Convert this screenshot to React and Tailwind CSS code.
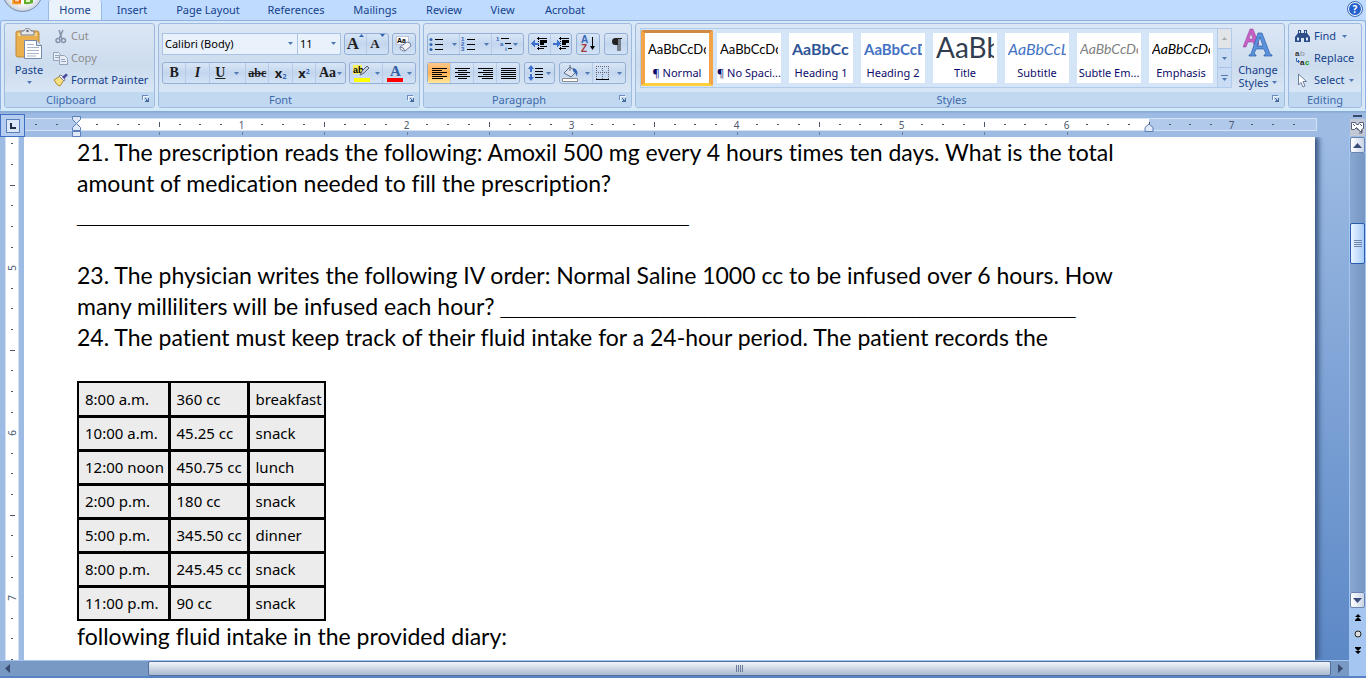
import clsx from "clsx";

const tabs = [
  { name: "Home", width: "w-[54px]" },
  { name: "Insert", width: "w-[60px]" },
  { name: "Page Layout", width: "w-[92px]" },
  { name: "References", width: "w-[84px]" },
  { name: "Mailings", width: "w-[74px]" },
  { name: "Review", width: "w-[64px]" },
  { name: "View", width: "w-[53px]" },
  { name: "Acrobat", width: "w-[72px]" },
];

const styleItems = [
  { name: "¶ Normal", sample: "AaBbCcDc", look: "text-[13px] text-black", selected: true },
  { name: "¶ No Spaci...", sample: "AaBbCcDc", look: "text-[13px] text-black" },
  { name: "Heading 1", sample: "AaBbCc", look: "text-base font-bold text-[#2f5597]" },
  { name: "Heading 2", sample: "AaBbCcD", look: "text-[15px] font-bold text-[#4472c4]" },
  { name: "Title", sample: "AaBb", look: "pb-1 text-[28px] text-[#323e4f]" },
  { name: "Subtitle", sample: "AaBbCcL", look: "text-base italic text-[#4472c4]" },
  { name: "Subtle Em...", sample: "AaBbCcDc", look: "text-sm italic text-[#808080]" },
  { name: "Emphasis", sample: "AaBbCcDc", look: "text-sm italic text-black" },
];

const intake = [
  ["8:00 a.m.", "360 cc", "breakfast"],
  ["10:00 a.m.", "45.25 cc", "snack"],
  ["12:00 noon", "450.75 cc", "lunch"],
  ["2:00 p.m.", "180 cc", "snack"],
  ["5:00 p.m.", "345.50 cc", "dinner"],
  ["8:00 p.m.", "245.45 cc", "snack"],
  ["11:00 p.m.", "90 cc", "snack"],
];

const Caret = ({ className = "" }) => (
  <svg className={clsx("shrink-0", className)} width="5" height="3" viewBox="0 0 5 3">
    <path d="M0 0h5L2.500 3z" fill="#4f79b5" />
  </svg>
);

const Launcher = ({ label }) => (
  <button aria-label={label} className="absolute right-0 top-0 flex h-[14px] w-3 items-center">
    <svg width="8" height="8" viewBox="0 0 8 8" fill="none" shapeRendering="crispEdges">
      <path d="M1.500 6V1.500H7" stroke="#fff" opacity=".7" />
      <path d="M0.500 5V0.500H6" stroke="#6a8cbc" />
      <path d="M3 3l3 3" stroke="#49699a" />
      <path d="M4 5h2V3h1v4H3V6h1z" fill="#49699a" />
    </svg>
  </button>
);

const Group = ({ title, launcher, className, children }) => (
  <section className={clsx("flex h-[85px] flex-col overflow-hidden rounded-[3px] border border-[#9cbbdf] bg-linear-to-b from-[#dce7f5] via-[#ccdcee] to-[#dfebf8]", className)}>
    <div className="min-h-0 flex-1">{children}</div>
    <div className={clsx("relative h-[15px] bg-[#c1d8f1] text-center leading-[15px] text-[#3e6aaa]", launcher && "pr-[17px]")}>
      {title}
      {launcher && <Launcher label={`${title} options`} />}
    </div>
  </section>
);

const ButtonBar = ({ className, children }) => (
  <div className={clsx("flex h-[22px] divide-x divide-[#b4cae6] rounded-[3px] border border-[#94b0d6] bg-linear-to-b from-[#d9e6f6] via-[#c3d6ee] to-[#d3e3f6]", className)}>
    {children}
  </div>
);

const Tool = ({ label, caret, active, className, children }) => (
  <button
    aria-label={label}
    className={clsx(
      "flex flex-1 items-center justify-center gap-1",
      active && "bg-linear-to-b from-[#fdc58a] via-[#ffb04f] to-[#ffe89a]",
      className
    )}
  >
    {children}
    {caret && <Caret />}
  </button>
);

const Lines = ({ rows }) => (
  <svg width="15" height="11" viewBox="0 0 15 11" shapeRendering="crispEdges">
    {rows.map(([x, w], i) => (
      <rect key={i} x={x} y={i * 2} width={w} height="1" fill="#000" />
    ))}
  </svg>
);

const ListIcon = ({ kind }) => (
  <svg width="16" height="16" viewBox="0 0 16 16">
    {kind === "multi" ? (
      <>
        <path d="M5 2.500h8M9 7.500h6M12 12.500h4" stroke="#000" />
        <g fill="#3565b5" fontSize="6" fontWeight="bold" fontFamily="Liberation Sans">
          <text x="0" y="5">1</text>
          <text x="4" y="10">a</text>
          <text x="9" y="15">i</text>
        </g>
      </>
    ) : (
      <path d="M6 3.500h8M6 8.500h8M6 13.500h8" stroke="#000" />
    )}
    {kind === "bullet" &&
      [3.5, 8.5, 13.5].map((y) => <circle key={y} cx="2" cy={y} r="1.500" fill="#3565b5" />)}
    {kind === "number" && (
      <g fill="#3565b5" fontSize="6" fontWeight="bold" fontFamily="Liberation Sans">
        <text x="0" y="5">1</text>
        <text x="0" y="10">2</text>
        <text x="0" y="15">3</text>
      </g>
    )}
  </svg>
);

const IndentIcon = ({ out }) => (
  <svg width="17" height="14" viewBox="0 0 17 14" shapeRendering="crispEdges">
    <path d="M6 1.500h10M9 3.500h7M9 5.500h7M9 7.500h4M9 9.500h7M6 11.500h7" stroke="#000" />
    <path d="M9 4.500h7M9 6.500h4" stroke="#000" />
    <path d="M7.500 0v14" stroke="#000" strokeDasharray="1 1" />
    <path d={out ? "M0 6.500l4-4v3h4v2H4v3z" : "M8 6.500l-4-4v3H0v2h4v3z"} fill="#3a6fd0" />
  </svg>
);

const PasteIcon = () => (
  <svg width="28" height="32" viewBox="0 0 28 32">
    <rect x="1" y="3" width="23" height="26" rx="2" fill="#eab04e" stroke="#b98a3e" />
    <path d="M3 5h19v3H3z" fill="#f8d48d" />
    <path d="M6 7V3h3c1-3.500 6-3.500 7 0h3v4z" fill="#e6e8ec" stroke="#777d87" />
    <circle cx="12.500" cy="3" r="1.200" fill="#5a6478" />
    <path d="M9.500 12.500h12l5 5v13h-17z" fill="#fff" stroke="#7189ad" />
    <path d="M21.500 12.500v5h5" fill="#dbe6f5" stroke="#7189ad" />
    <path d="M12 16.500h7M12 19.500h12M12 22.500h12M12 25.500h12M12 28h9" stroke="#a9b5c9" />
  </svg>
);

const OfficeOrb = () => (
  <svg className="absolute left-0 top-0" width="46" height="14" viewBox="0 0 46 14">
    <defs>
      <radialGradient id="orb" cx="23" cy="-8" r="21" gradientUnits="userSpaceOnUse">
        <stop offset="0.500" stopColor="#fff" />
        <stop offset="0.850" stopColor="#d6dce7" />
        <stop offset="1" stopColor="#a3acba" />
      </radialGradient>
    </defs>
    <circle cx="22.500" cy="-8.500" r="20" fill="url(#orb)" stroke="#7b8fae" />
    <path d="M13 0h8v3.500q-2 1-7 .5-1-.5-1-4z" fill="#e8641b" />
    <path d="M15 0h4v1.500h-4z" fill="#ffd9a0" />
    <path d="M24 -1h9v4q-3 1.500-9 1z" fill="#5fae2c" />
    <path d="M26 0h4v2h-4z" fill="#e4f6c3" />
    <path d="M13 0v3.500h8" fill="none" stroke="#f5a315" strokeWidth="1.500" />
  </svg>
);

const ClipboardGroup = () => (
  <Group title="Clipboard" launcher className="w-[151px]">
    <div className="flex h-full">
      <button className="flex w-[48px] flex-col items-center pt-1">
        <PasteIcon />
        <span className="mt-[3px] leading-[14px]">Paste</span>
        <Caret className="mt-1" />
      </button>
      <div className="flex flex-col items-start pt-px">
        <button className="flex h-[22px] items-center gap-[3px] text-[#8d8d8d]">
          <svg width="15" height="15" viewBox="0 0 15 15" fill="none" stroke="#8493a9">
            <path d="M6 1l3 9M10 1L6 10" strokeWidth="1.500" />
            <circle cx="5" cy="11.500" r="2" strokeWidth="1.500" />
            <circle cx="10.500" cy="11.500" r="2" strokeWidth="1.500" />
          </svg>
          Cut
        </button>
        <button className="flex h-[22px] items-center gap-[3px] text-[#8d8d8d]">
          <svg width="15" height="14" viewBox="0 0 15 14" fill="#e9eef6" stroke="#93a3bb">
            <path d="M.5 1.500h5l2 2v6h-7zM2 4.500h4M2 6.500h4" />
            <path d="M6.500 4.500h5l3 3v6h-8zM8 8.500h4M8 10.500h5" />
          </svg>
          Copy
        </button>
        <button className="flex h-[22px] items-center gap-[3px]">
          <svg width="15" height="14" viewBox="0 0 15 14">
            <path d="M1 7l6-4 4 4-4 6q-3 0-6-6z" fill="#f5df83" stroke="#ad8b32" />
            <path d="M6 3l2-1 4 4-1 2z" fill="#fff" stroke="#707b8f" />
            <path d="M9 4l4-3.500L15 2l-4 4z" fill="#4d4a9b" />
          </svg>
          Format Painter
        </button>
      </div>
    </div>
  </Group>
);

const Combo = ({ label, value, className }) => (
  <label className={clsx("relative block h-[22px] border border-[#a9c3e6] bg-[#e9f1fb]", className)}>
    <select aria-label={label} className="block h-full w-full appearance-none px-[2px] text-black">
      <option>{value}</option>
    </select>
    <Caret className="absolute right-1 top-2" />
  </label>
);

const FontGroup = () => (
  <Group title="Font" launcher className="w-[262px]">
    <div className="flex flex-col gap-[7px] px-[3px] pt-[9px]">
      <div className="flex gap-[3px]">
        <div className="flex">
          <Combo label="Font" value="Calibri (Body)" className="w-[136px]" />
          <Combo label="Font size" value="11" className="w-[43px] border-l-0" />
        </div>
        <ButtonBar className="w-[45px] font-['Liberation_Serif'] font-bold text-[#222]">
          <Tool label="Grow font">
            <span className="flex items-start text-[17px] leading-5">A<svg width="5" height="4" viewBox="0 0 5 4"><path d="M0 3L2.500 0 5 3z" fill="#3565b5" /></svg></span>
          </Tool>
          <Tool label="Shrink font">
            <span className="flex items-start text-[13px] leading-5">A<svg width="5" height="4" viewBox="0 0 5 4"><path d="M0 0h5L2.500 3z" fill="#3565b5" /></svg></span>
          </Tool>
        </ButtonBar>
        <ButtonBar className="w-6">
          <Tool label="Clear formatting">
            <svg width="18" height="18" viewBox="0 0 18 18">
              <rect x="1.500" y="1.500" width="12" height="8" fill="#fff" stroke="#b9c4d8" />
              <text x="2" y="8" fontSize="7" fontWeight="bold" fontFamily="Liberation Sans">Aa</text>
              <path d="M5 12l7-5q4 0 4 4l-6 5q-5 0-5-4z" fill="#f3f3f8" stroke="#73809b" />
              <path d="M5 12q4 0 5 4" fill="none" stroke="#73809b" />
            </svg>
          </Tool>
        </ButtonBar>
      </div>
      <div className="flex gap-[3px]">
        <ButtonBar className="w-[184px] font-['Liberation_Serif'] text-sm font-bold text-[#1d1d1d]">
          <Tool label="Bold">B</Tool>
          <Tool label="Italic"><i>I</i></Tool>
          <Tool label="Underline" caret className="flex-[1.600] gap-[9px]"><u>U</u></Tool>
          <Tool label="Strikethrough"><s className="text-xs">abc</s></Tool>
          <Tool label="Subscript"><span className="font-['Noto_Sans'] text-[13px]">x<sub className="text-[7px] text-[#3565b5]">2</sub></span></Tool>
          <Tool label="Superscript"><span className="font-['Noto_Sans'] text-[13px]">x<sup className="text-[7px] text-[#3565b5]">2</sup></span></Tool>
          <Tool label="Change case" caret className="flex-[1.300] gap-px">Aa</Tool>
        </ButtonBar>
        <ButtonBar className="w-[67px]">
          <Tool label="Text highlight color" caret>
            <svg width="18" height="18" viewBox="0 0 18 18">
              <path d="M0 1h9v9H0z" fill="#f6f05a" />
              <text x="0" y="9" fontSize="9" fontWeight="bold" fontFamily="Liberation Sans">ab</text>
              <path d="M7 11l2-4 5-5 2 2-5 5z" fill="#c2ccdc" stroke="#5a6274" />
              <path d="M1 14h16v4H1z" fill="#ffff00" />
            </svg>
          </Tool>
          <Tool label="Font color" caret>
            <svg width="16" height="18" viewBox="0 0 16 18">
              <text x="3" y="12" fontSize="15" fontWeight="bold" fill="#355ea3" fontFamily="Liberation Serif">A</text>
              <path d="M0 14h16v4H0z" fill="#ff0000" />
            </svg>
          </Tool>
        </ButtonBar>
      </div>
    </div>
  </Group>
);

const ParagraphGroup = () => (
  <Group title="Paragraph" launcher className="w-[209px]">
    <div className="flex flex-col gap-[7px] px-[3px] pt-[9px]">
      <div className="flex gap-1">
        <ButtonBar className="w-[98px]">
          <Tool label="Bullets" caret className="gap-[7px]"><ListIcon kind="bullet" /></Tool>
          <Tool label="Numbering" caret className="gap-[7px]"><ListIcon kind="number" /></Tool>
          <Tool label="Multilevel list" caret className="gap-px"><ListIcon kind="multi" /></Tool>
        </ButtonBar>
        <ButtonBar className="w-[45px]">
          <Tool label="Decrease indent"><IndentIcon out /></Tool>
          <Tool label="Increase indent"><IndentIcon /></Tool>
        </ButtonBar>
        <ButtonBar className="w-6">
          <Tool label="Sort">
            <svg width="17" height="18" viewBox="0 0 17 18">
              <g fontSize="10" fontWeight="bold" fontFamily="Liberation Sans">
                <text x="1" y="8" fill="#3565b5">A</text>
                <text x="1" y="17" fill="#a33a3a">Z</text>
              </g>
              <path d="M12.500 2v11" stroke="#000" />
              <path d="M10 11h5l-2.500 4z" />
            </svg>
          </Tool>
        </ButtonBar>
        <ButtonBar className="w-6">
          <Tool label="Show paragraph marks">
            <svg width="11" height="13" viewBox="0 0 11 13">
              <path d="M4.500 0H11v1H9.500v12h-1V1h-1v12h-1V7H4.500a3.500 3.500 0 010-7z" fill="#222" />
            </svg>
          </Tool>
        </ButtonBar>
      </div>
      <div className="flex gap-1">
        <ButtonBar className="w-[93px]">
          <Tool label="Align left" active><Lines rows={[[0, 15], [0, 10], [0, 15], [0, 10], [0, 15], [0, 11]]} /></Tool>
          <Tool label="Center"><Lines rows={[[0, 15], [3, 9], [0, 15], [3, 9], [0, 15], [3, 9]]} /></Tool>
          <Tool label="Align right"><Lines rows={[[0, 15], [5, 10], [0, 15], [5, 10], [0, 15], [4, 11]]} /></Tool>
          <Tool label="Justify"><Lines rows={[[0, 15], [0, 15], [0, 15], [0, 15], [0, 15], [0, 15]]} /></Tool>
        </ButtonBar>
        <ButtonBar className="w-[31px]">
          <Tool label="Line spacing" caret className="gap-[2px]">
            <svg width="16" height="16" viewBox="0 0 16 16">
              <path d="M3 0l3 4H4v3H2V4H0zM3 16l3-4H4V9H2v3H0z" fill="#3a6fd0" />
              <path d="M7 3.500h8M7 6.500h8M7 9.500h8M7 12.500h8" stroke="#000" />
            </svg>
          </Tool>
        </ButtonBar>
        <ButtonBar className="w-[67px]">
          <Tool label="Shading" caret className="gap-[6px]">
            <svg width="17" height="17" viewBox="0 0 17 17">
              <path d="M2 8l6-6 6 5-5 5z" fill="#dfe5ef" stroke="#5b6a85" />
              <path d="M8 0v6" stroke="#5b6a85" />
              <path d="M11 3q6 1 4 9-1-4-4-6z" fill="#3565b5" />
              <path d="M.5 13.500h15v3H.5z" fill="#fff" stroke="#8b8b8b" />
            </svg>
          </Tool>
          <Tool label="Borders" caret className="gap-[7px]">
            <svg width="14" height="14" viewBox="0 0 14 14" shapeRendering="crispEdges">
              <path d="M0 .5h13M0 6.500h13M.5 0v13M6.500 0v13M12.500 0v13" stroke="#667" strokeDasharray="1 1" />
              <path d="M0 13.500h13" stroke="#000" />
            </svg>
          </Tool>
        </ButtonBar>
      </div>
    </div>
  </Group>
);

const StylesGroup = () => (
  <Group title="Styles" launcher className="min-w-0 flex-1">
    <div className="flex h-full items-start gap-[3px] pl-1 pr-[3px] pt-1">
      <div className="flex h-[60px] min-w-0 flex-1 border border-[#b1cbea] bg-[#d4e5f7]">
        <div className="flex min-w-0 flex-1 overflow-hidden">
          {styleItems.map((item) => (
            <button
              key={item.name}
              className={clsx(
                "m-px h-[56px] w-[70px] shrink-0 border-[3px] first:mx-0 first:w-[72px] first:border-x-4",
                item.selected
                  ? "rounded-[2px] border-b-[#ffcf3d] border-l-[#f3a447] border-r-[#f3a447] border-t-[#d08a45]"
                  : "border-transparent"
              )}
            >
              <span className="flex h-full flex-col items-center overflow-hidden bg-white">
                <span className={clsx("flex h-8 w-full items-center overflow-hidden whitespace-nowrap px-[3px] font-[Lato] leading-none", item.look)}>
                  <span className="w-full overflow-hidden text-left leading-[24px]">{item.sample}</span>
                </span>
                <span className="whitespace-nowrap leading-4 text-[#0b0b6b]">{item.name}</span>
              </span>
            </button>
          ))}
        </div>
        <div className="flex w-[14px] flex-col divide-y divide-[#a9c3e6] border-l border-[#b1cbea] bg-[#c9dcf3]">
          <button aria-label="Previous styles" className="flex flex-1 items-center justify-center bg-[#e2e4e8]">
            <svg width="5" height="3" viewBox="0 0 5 3"><path d="M0 3h5L2.500 0z" fill="#a9a9a9" /></svg>
          </button>
          <button aria-label="More rows" className="flex flex-1 items-center justify-center"><Caret /></button>
          <button aria-label="All styles" className="flex flex-1 flex-col items-center justify-center gap-[2px]">
            <span className="h-px w-[7px] bg-[#4f79b5]" />
            <Caret />
          </button>
        </div>
      </div>
      <button className="flex w-[46px] flex-col items-center leading-[13px]">
        <svg width="30" height="31" viewBox="0 0 30 31">
          <path d="M0 19L7 1h3l6 15-2 3h-2l-2-5H5l-2 5zM6 11h4L8 5z" fill="#c85fc4" stroke="#8c3f9a" strokeWidth=".5" />
          <path d="M6 27l2-1 7-21h4l8 21 2 1v1h-8v-1l2-1-2-5h-8l-2 5 2 1v1H6zM14 18h6l-3-9z" fill="#5a92de" stroke="#2f5fa8" strokeWidth=".7" />
        </svg>
        <span className="mt-1">Change</span>
        <span className="flex items-center gap-1">Styles <Caret /></span>
      </button>
    </div>
  </Group>
);

const EditingGroup = () => (
  <Group title="Editing" className="w-[74px]">
    <div className="flex flex-col items-start pl-[6px] pt-px">
      <button className="flex h-[22px] items-center gap-1">
        <svg width="15" height="14" viewBox="0 0 15 14" fill="#2d4e86">
          <path d="M3 1h3v3h3V1h3v3l3 4v5H9V9H6v4H0V8l3-4z" />
          <path d="M2 8.500h2v3H2zM11 8.500h2v3h-2zM4 2h1v2H4zM10 2h1v2h-1z" fill="#dce8f7" />
        </svg>
        Find <Caret className="ml-[2px]" />
      </button>
      <button className="flex h-[22px] items-center gap-1">
        <svg width="15" height="18" viewBox="0 0 15 18" fontFamily="Liberation Sans" fontWeight="bold" fontSize="8">
          <text x="0" y="7" fill="#333">a</text>
          <text x="5" y="7" fill="#a0a8b5">b</text>
          <text x="5" y="16" fill="#222">a</text>
          <text x="10" y="16" fill="#149414">c</text>
          <path d="M1.500 9v3.500H4M3 11l1.500 1.500L3 14" fill="none" stroke="#3565b5" />
        </svg>
        Replace
      </button>
      <button className="flex h-[22px] items-center gap-1">
        <svg width="15" height="15" viewBox="0 0 15 15">
          <path d="M3.500 1v11l2.500-2.500 2 4.500 2-1-2-4.500h3.500z" fill="#fff" stroke="#6b7f9e" />
        </svg>
        Select <Caret />
      </button>
    </div>
  </Group>
);

const Mark = ({ n, number, vertical }) => {
  if (n === 7)
    return <span className={clsx("text-[10px] leading-none text-[#4c5a6e]", vertical && "-rotate-90")}>{number}</span>;
  const long = n === 3;
  return (
    <span
      className={clsx(
        "bg-[#4c5566]",
        !long && "h-px w-[2px]",
        long && (vertical ? "h-px w-[5px]" : "h-[5px] w-px")
      )}
    />
  );
};

const RulerInch = ({ number, vertical }) => (
  <div className={clsx("grid shrink-0 place-items-center", vertical ? "h-[165px] w-full grid-rows-8" : "h-full w-[165px] grid-cols-8")}>
    {[0, 1, 2, 3, 4, 5, 6, 7].map((n) => (
      <Mark key={n} n={n} number={number} vertical={vertical} />
    ))}
  </div>
);

const Ruler = () => (
  <div className="flex h-[23px] shrink-0 items-start bg-[#9dbbe3]">
    <button aria-label="Tab stop" className="flex h-[23px] w-[25px] items-center justify-center border border-[#3d6fc4] bg-[#b5cdf0]">
      <span className="flex h-[14px] w-[14px] items-center justify-center border border-[#5b7fb9] bg-[#dce8f8]">
        <span className="h-[6px] w-[6px] border-b-2 border-l-2 border-[#222c44]" />
      </span>
    </button>
    <div className="relative mt-1 flex h-[13px] w-[1292px] border-y border-r border-[#d5e2f5]">
      <div className="flex w-[51px] items-center justify-center gap-[19px] bg-[#b1c9eb] pr-2">
        <span className="h-px w-[2px] bg-[#4c5566]" />
        <span className="h-px w-[2px] bg-[#4c5566]" />
      </div>
      <div className="w-[1073px] bg-white" />
      <div className="flex-1 bg-[#b1c9eb]" />
      <div className="absolute inset-y-0 left-[62px] right-5 flex overflow-hidden">
        {[1, 2, 3, 4, 5, 6, 7].map((n) => (
          <RulerInch key={n} number={n} />
        ))}
        <div className="grid w-[62px] shrink-0 grid-cols-3 place-items-center">
          <Mark n={0} />
          <Mark n={1} />
          <Mark n={2} />
        </div>
      </div>
      {/* default tab stops, one every half inch */}
      <div className="absolute left-[134px] top-[13px] grid w-[990px] grid-cols-12">
        {Array.from({ length: 12 }, (_, i) => (
          <span key={i} className="h-[3px] w-px bg-[#6f7f99]" />
        ))}
      </div>
      <svg className="absolute -top-1 left-[46px]" width="11" height="23" viewBox="0 0 11 23" fill="#dfe9f7" stroke="#5b7fb9">
        <path d="M1.500 1.500h8v3l-4 4-4-4zM1.500 15.500v-3l4-4 4 4v3zM1.500 16.500h8v5h-8z" />
      </svg>
      <svg className="absolute left-[1119px] top-1" width="10" height="9" viewBox="0 0 10 9" fill="#dfe9f7" stroke="#5b7fb9">
        <path d="M1 8.500v-4L5 1l4 3.500v4z" />
      </svg>
    </div>
    <span className="flex-1" />
    <button aria-label="View ruler" className="flex w-[17px] flex-col items-center gap-[2px] pt-px">
      <span className="h-[2px] w-[9px] bg-[#37496b]" />
      <svg width="15" height="17" viewBox="0 0 15 17">
        <path d="M0 0h15v17H0z" fill="#c3c9d4" />
        <path d="M1.500 3.500h4l1 2h2l1-2h4v6l-2 1v3l-2-2-3-3-2 2h-3z" fill="#fff" stroke="#56627c" />
        <path d="M3 5l2 2M6 9l5 4M9 14h3v-3M10 5l2 2" fill="none" stroke="#56627c" />
      </svg>
    </button>
  </div>
);

const Blank = ({ length }) => (
  <span className="font-['Liberation_Sans'] text-[22px] font-bold leading-none">{"_".repeat(length)}</span>
);

const Document = () => (
  <article className="w-[1291px] shrink-0 bg-white pl-[53px] font-[Lato] text-[23px] leading-[31px] text-black shadow-[4px_0_5px_#3c5a85] [font-variant-ligatures:none]">
    <p>
      21. The prescription reads the following: Amoxil 500 mg every 4 hours times ten days. What is the total
      <br />
      amount of medication needed to fill the prescription?
    </p>
    <p><Blank length={50} /></p>
    <p className="mt-[30px]">
      23. The physician writes the following IV order: Normal Saline 1000 cc to be infused over 6 hours. How
      <br />
      many milliliters will be infused each hour? <Blank length={47} />
    </p>
    <p>24. The patient must keep track of their fluid intake for a 24-hour period. The patient records the</p>
    <table className="mt-7 border-collapse border-2 border-b-0 border-black bg-[#ececec] font-['Noto_Sans'] text-[15px] leading-5">
      <tbody>
        {intake.map(([time, amount, meal]) => (
          <tr key={time} className="h-[34px] border-b-[3px] border-black last:border-b-2">
            <td className="w-[91px] border-r-[3px] border-black pl-[6px]">{time}</td>
            <td className="w-[79px] border-r-[3px] border-black pl-[6px]">{amount}</td>
            <td className="w-[77px] pl-[6px]">{meal}</td>
          </tr>
        ))}
      </tbody>
    </table>
    <p>following fluid intake in the provided diary:</p>
  </article>
);

const VerticalScroll = () => (
  <div className="flex w-[17px] flex-col items-center border-x border-[#a6c6f2] bg-[#a6c6f2]">
    <button aria-label="Scroll up" className="flex h-4 w-[15px] items-center justify-center rounded-[2px] border border-[#6c84ad] bg-linear-to-r from-white to-[#c9d5e8]">
      <svg width="9" height="5" viewBox="0 0 9 5"><path d="M0 5h9L4.500 0z" fill="#3a4c7a" /></svg>
    </button>
    <div className="flex min-h-0 w-full flex-1 flex-col bg-linear-to-r from-[#88a7d0] to-[#7697c4] pt-[70px]">
      <div className="flex h-[41px] w-[15px] flex-col items-center justify-center gap-px rounded-[2px] border border-[#2c5cae] bg-linear-to-r from-[#e9f3ff] to-[#a8ccfa]">
        <span className="h-px w-2 bg-[#7186a8]" />
        <span className="h-px w-2 bg-[#7186a8]" />
        <span className="h-px w-2 bg-[#7186a8]" />
        <span className="h-px w-2 bg-[#7186a8]" />
      </div>
    </div>
    <button aria-label="Scroll down" className="flex h-4 w-[15px] items-center justify-center rounded-[2px] border border-[#6c84ad] bg-linear-to-r from-white to-[#c9d5e8]">
      <svg width="9" height="5" viewBox="0 0 9 5"><path d="M0 0h9L4.500 5z" fill="#3a4c7a" /></svg>
    </button>
    <div className="flex h-[52px] flex-col items-center justify-between py-[6px]">
      <svg width="6" height="7" viewBox="0 0 6 7"><path d="M3 0l3 3H0zM3 3l3 3H0zM0 6h6v1H0z" /></svg>
      <svg width="8" height="8" viewBox="0 0 8 8"><circle cx="4" cy="4" r="3" fill="#ddd" stroke="#222" /></svg>
      <svg width="6" height="7" viewBox="0 0 6 7"><path d="M3 7l3-3H0zM3 4l3-3H0zM0 0h6v1H0z" /></svg>
    </div>
  </div>
);

const HorizontalScroll = () => (
  <div className="flex h-[18px] shrink-0 border-b-2 border-[#5583c4] bg-[#a6c6f2] pr-[17px] pt-px">
    <div className="flex flex-1 bg-[#7899c4]">
      <button aria-label="Scroll left" className="flex w-[148px] items-center pl-[5px]">
        <svg width="5" height="9" viewBox="0 0 5 9"><path d="M5 0v9L0 4.500z" fill="#39496f" /></svg>
      </button>
      <div className="flex flex-1 items-center justify-center gap-px rounded-[2px] border border-[#51709f] bg-linear-to-b from-[#f1f5fa] to-[#a9b9d0]">
        <span className="h-[7px] w-px bg-[#6a7b98]" />
        <span className="h-[7px] w-px bg-[#6a7b98]" />
        <span className="h-[7px] w-px bg-[#6a7b98]" />
        <span className="h-[7px] w-px bg-[#6a7b98]" />
      </div>
      <button aria-label="Scroll right" className="flex w-[18px] items-center justify-center">
        <svg width="5" height="9" viewBox="0 0 5 9"><path d="M0 0v9l5-4.500z" fill="#39496f" /></svg>
      </button>
    </div>
  </div>
);

export default function App() {
  return (
    <div className="flex h-screen flex-col overflow-hidden bg-[#bfdbff] font-['Noto_Sans',sans-serif] text-[11px] text-[#15428b]">
      <header className="relative flex h-5 shrink-0 items-end pl-12">
        <OfficeOrb />
        <nav className="flex flex-1">
          {tabs.map((tab) => (
            <a
              key={tab.name}
              href="#"
              className={clsx(
                "h-5 text-center leading-5",
                tab.width,
                tab.name === "Home" && "rounded-t-[3px] border-x border-[#9ab9e4] bg-[#eaf2fb]"
              )}
            >
              {tab.name}
            </a>
          ))}
        </nav>
        <button aria-label="Help" className="mb-1 mr-1 flex h-[14px] w-[14px] items-center justify-center rounded-full border border-white bg-[#2461cf] text-[10px] font-bold text-white outline outline-[#3c69b5]">
          ?
        </button>
      </header>

      <div className="flex h-[91px] shrink-0 gap-[3px] rounded-[3px] border border-b-2 border-[#8db2e3] border-b-[#cfeaf9] bg-[#d9e8f8] px-[3px] pt-[2px]">
        <ClipboardGroup />
        <FontGroup />
        <ParagraphGroup />
        <StylesGroup />
        <EditingGroup />
      </div>
      <div className="h-[3px] shrink-0 bg-linear-to-b from-[#86a6d0] to-[#9dbbe3]" />

      <Ruler />

      <main className="flex min-h-0 flex-1 bg-linear-to-b from-[#9dbbe3] to-[#5c88c6]">
        <div className="w-6 shrink-0 overflow-hidden bg-[#9dbbe3] pl-[5px] pr-[5px]">
          <div className="-mt-6 border-x border-[#d5e2f5] bg-white">
            {[5, 6, 7, 8].map((n) => (
              <RulerInch key={n} number={n} vertical />
            ))}
          </div>
        </div>
        <div className="flex min-w-0 flex-1 overflow-hidden">
          <Document />
        </div>
        <VerticalScroll />
      </main>

      <HorizontalScroll />
    </div>
  );
}
